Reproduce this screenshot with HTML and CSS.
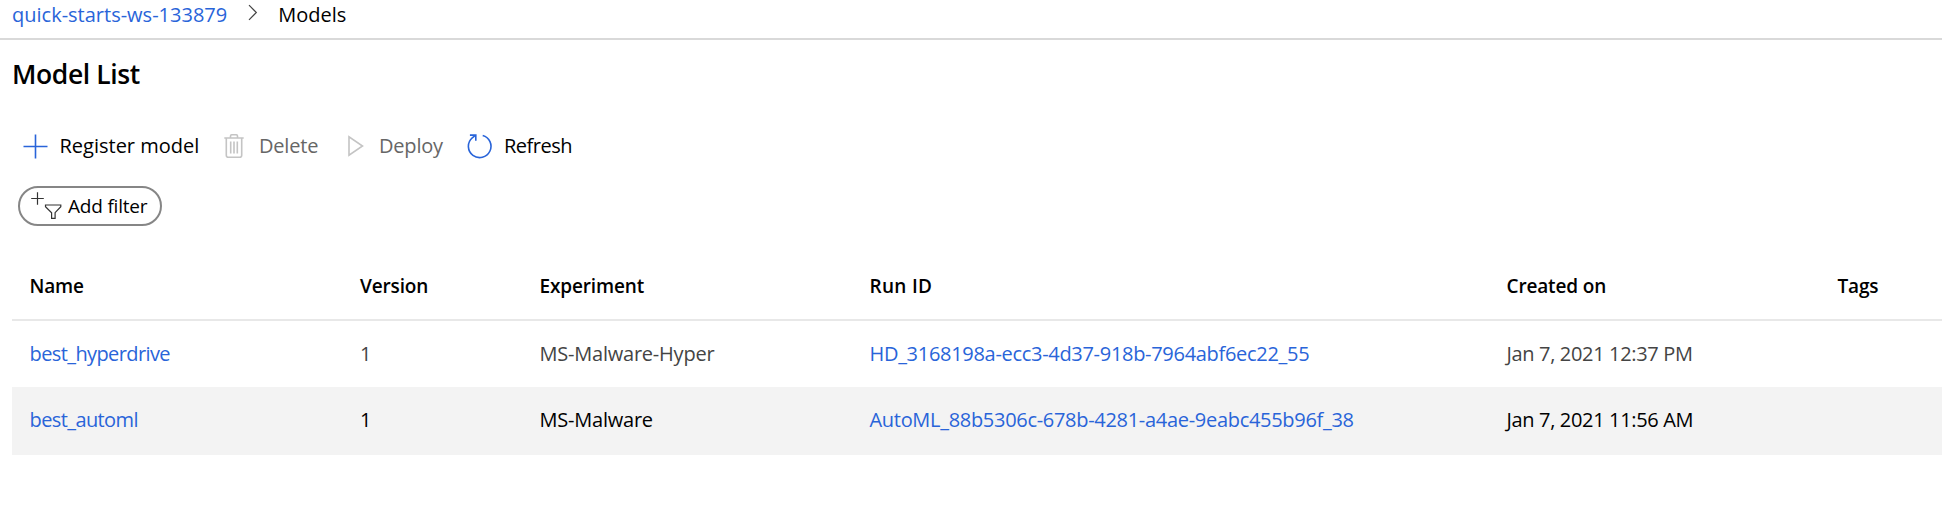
FILE: index.html
```
<!DOCTYPE html>
<html lang="en">
<head>
<meta charset="utf-8">
<title>Model List</title>
<link rel="stylesheet" href="styles.css">
</head>
<body>
<nav class="breadcrumb">
  <a class="link" href="#">quick-starts-ws-133879</a>
  <svg class="chevron" width="10" height="17" viewBox="0 0 10 17"><path d="M1 1.200 8.300 8.500 1 15.800"/></svg>
  <span>Models</span>
</nav>
<main class="page">
  <h1 class="title">Model List</h1>
  <div class="toolbar">
    <button class="command command-register">
      <svg class="icon icon-blue" width="25" height="25" viewBox="0 0 25 25"><path d="M12.500 .5v24M.5 12.500h24"/></svg>
      <span>Register model</span>
    </button>
    <button class="command command-delete" disabled>
      <svg class="icon icon-muted" width="20" height="24" viewBox="0 0 20 24"><path d="M.3 4h19.400M6.500 4V2Q6.500.8 7.700.8h4.600Q13.500.8 13.500 2v2M2.300 4v17.200Q2.300 23.200 4.300 23.200h11.400Q17.700 23.200 17.700 21.200V4M6.700 7.500v12M10 7.500v12M13.300 7.500v12"/></svg>
      <span>Delete</span>
    </button>
    <button class="command command-deploy" disabled>
      <svg class="icon icon-muted" width="16" height="22" viewBox="0 0 16 22"><path d="M1 1.800v18.400L14.500 11z"/></svg>
      <span>Deploy</span>
    </button>
    <button class="command command-refresh">
      <svg class="icon icon-blue" width="25" height="25" viewBox="0 0 25 25"><path d="M15.700 1.400A11.300 11.300 0 1 1 5 4L8.600 1.200M2.900 1.100h5.900v5.700"/></svg>
      <span>Refresh</span>
    </button>
  </div>
  <button class="filter">
    <svg class="filter-icon" width="32" height="28" viewBox="0 0 32 28"><path d="M7.500 .3v12.500M1.200 6.500h12.600M15.500 13h15.300v1.700l-5.700 6v5.700h-3.500v-5.700l-6.100-6z"/></svg>
    <span>Add filter</span>
  </button>
  <div class="table">
    <div class="row row-head"><span>Name</span><span>Version</span><span>Experiment</span><span class="wide">Run ID</span><span>Created on</span><span>Tags</span></div>
    <div class="row">
      <a class="link" href="#">best_hyperdrive</a><span class="num">1</span><span class="experiment">MS-Malware-Hyper</span><a class="link run" href="#">HD_3168198a-ecc3-4d37-918b-7964abf6ec22_55</a><span class="date">Jan 7, 2021 12:37 PM</span><span></span>
    </div>
    <div class="row row-active">
      <a class="link" href="#">best_automl</a><span class="num">1</span><span class="experiment">MS-Malware</span><a class="link run" href="#">AutoML_88b5306c-678b-4281-a4ae-9eabc455b96f_38</a><span class="date">Jan 7, 2021 11:56 AM</span><span></span>
    </div>
  </div>
</main>
</body>
</html>
```
FILE: styles.css
```
* { box-sizing: border-box; }
body {
  margin: 0;
  background: #fff;
  color: #000;
  font: 20px/28px "Open Sans", "Noto Sans", sans-serif;
  overflow: hidden;
}
button {
  margin: 0;
  padding: 0;
  border: 0;
  background: none;
  color: inherit;
  font: inherit;
}
svg { display: block; flex: none; fill: none; }
.link { color: #2964d9; text-decoration: none; }

.breadcrumb {
  display: flex;
  align-items: center;
  height: 40px;
  padding: 0 0 9px 12px;
  border-bottom: 2px solid #d9d9d9;
}
.chevron { margin: 0 20px 4px 21px; stroke: #444; stroke-width: 1.2; }

.page { padding-left: 12px; }
.title {
  margin: 0;
  padding-top: 16px;
  height: 84px;
  font-size: 26.5px;
  line-height: 36px;
  font-weight: 600;
  letter-spacing: -.4px;
}

.toolbar { display: flex; height: 44px; padding-left: 11px; }
.command { display: flex; align-items: center; white-space: nowrap; }
.command:disabled { color: #666; }
.command-register { width: 201px; gap: 11.500px; }
.command-delete { width: 124px; gap: 15px; letter-spacing: -.2px; }
.command-deploy { width: 119px; gap: 15px; letter-spacing: -.2px; }
.command-refresh { gap: 12px; letter-spacing: -.5px; }
.icon { stroke-width: 1.6; }
.icon-blue { stroke: #2964d9; }
.icon-muted { stroke: #c4c4c4; }

.filter {
  display: flex;
  align-items: center;
  width: 144px;
  height: 40px;
  margin: 18px 0 0 6px;
  padding-left: 10px;
  gap: 6px;
  border: 2px solid #868686;
  border-radius: 20px;
  font-size: 19px;
  letter-spacing: -.2px;
  white-space: nowrap;
}
.filter-icon { stroke: #333; stroke-width: 1.2; }

.table { margin-top: 26px; }
.row {
  display: grid;
  grid-template-columns: 330.500px 179.500px 330px 637px 331px 1fr;
  align-items: center;
  height: 66px;
  padding-left: 17.500px;
  color: #444;
  letter-spacing: -.6px;
  white-space: nowrap;
}
.row-head {
  height: 69px;
  border-bottom: 2px solid #e8e8e8;
  color: #000;
  font-size: 19px;
  font-weight: 600;
  letter-spacing: -.15px;
}
.row-head .wide { letter-spacing: .3px; }
.row-active { height: 68px; padding-bottom: 2px; background: #f3f3f3; color: #000; }
.run { letter-spacing: -.3px; }
.experiment { letter-spacing: -.22px; }
.date { letter-spacing: -.34px; }
```
